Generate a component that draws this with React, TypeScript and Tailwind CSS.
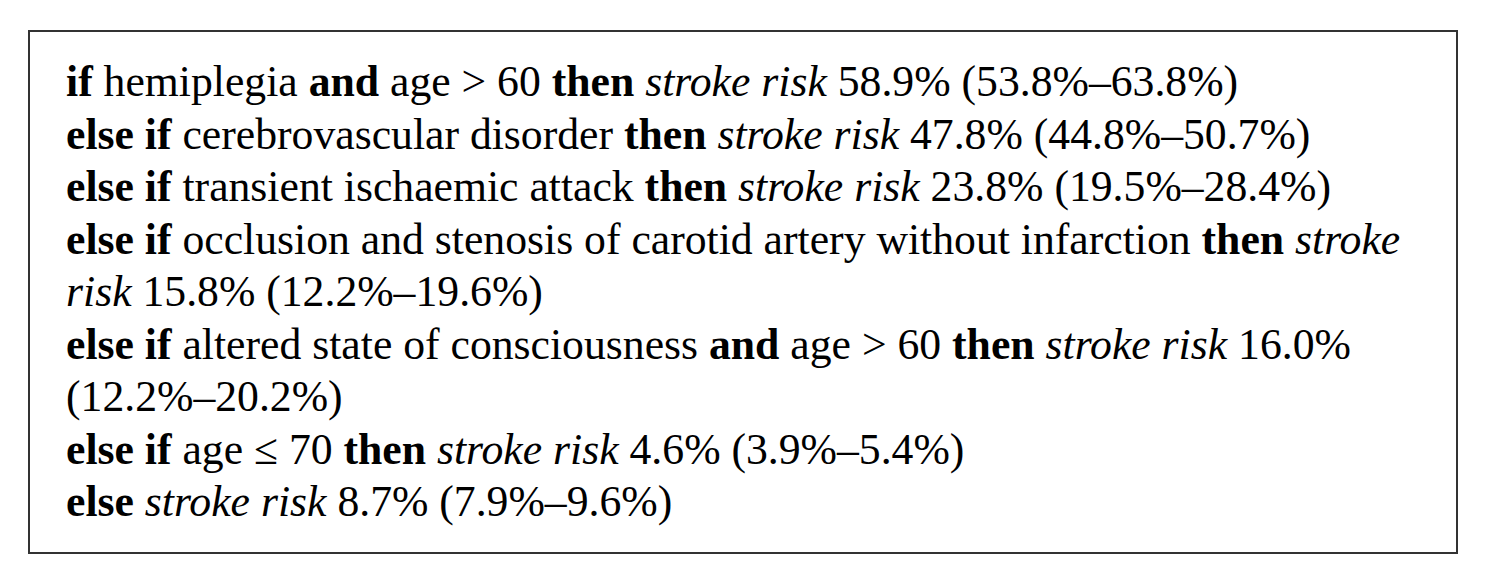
function B({ children }: { children: React.ReactNode }) {
  return <b className="font-bold">{children}</b>;
}

function I({ children }: { children: React.ReactNode }) {
  return <i className="italic">{children}</i>;
}

export default function App() {
  return (
    <div className="w-[1500px] h-[579px] bg-white pt-[30px] pl-[28px]">
      <div
        className="w-[1430px] h-[524px] border-2 border-[#333] pl-[36px] pr-[36px] pt-[23px] text-black text-[43.7px] leading-[52.5px]"
        style={{ fontFamily: '"Liberation Serif", "Times New Roman", serif' }}
      >
        <p>
          <B>if</B> hemiplegia <B>and</B> age &gt; 60 <B>then</B> <I>stroke risk</I> 58.9% (53.8%–63.8%)
        </p>
        <p>
          <B>else if</B> cerebrovascular disorder <B>then</B> <I>stroke risk</I> 47.8% (44.8%–50.7%)
        </p>
        <p>
          <B>else if</B> transient ischaemic attack <B>then</B> <I>stroke risk</I> 23.8% (19.5%–28.4%)
        </p>
        <p>
          <B>else if</B> occlusion and stenosis of carotid artery without infarction <B>then</B> <I>stroke risk</I> 15.8%
          (12.2%–19.6%)
        </p>
        <p>
          <B>else if</B> altered state of consciousness <B>and</B> age &gt; 60 <B>then</B> <I>stroke risk</I> 16.0%
          (12.2%–20.2%)
        </p>
        <p>
          <B>else if</B> age ≤ 70 <B>then</B> <I>stroke risk</I> 4.6% (3.9%–5.4%)
        </p>
        <p>
          <B>else</B> <I>stroke risk</I> 8.7% (7.9%–9.6%)
        </p>
      </div>
    </div>
  );
}
